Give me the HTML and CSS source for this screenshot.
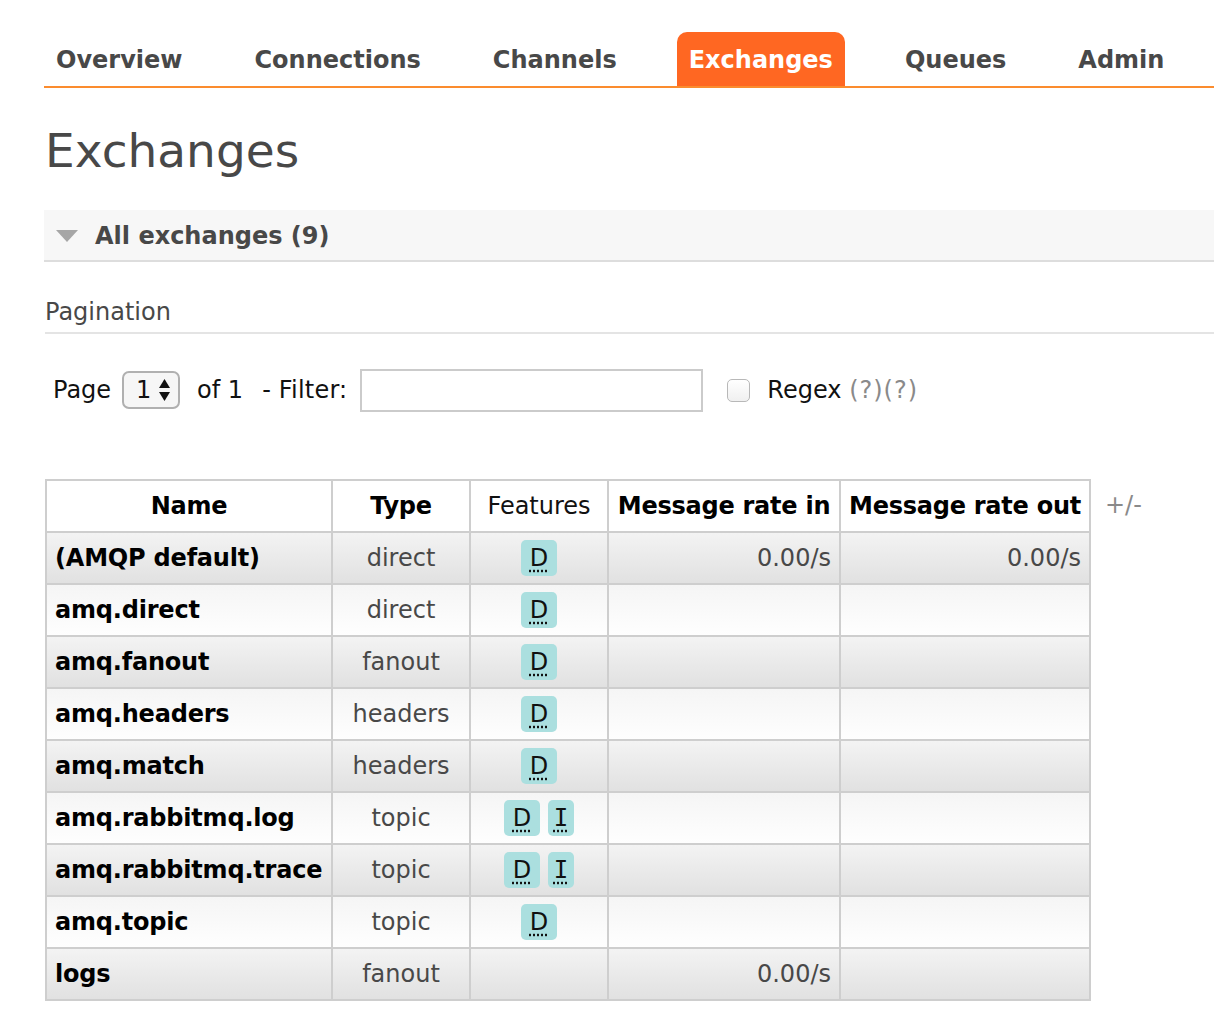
FILE: index.html
```html
<!DOCTYPE html>
<html lang="en">
<head>
<meta charset="utf-8">
<title>RabbitMQ Management - Exchanges</title>
<link rel="stylesheet" href="styles.css">
</head>
<body>
<nav class="tabs">
  <ul class="tab-list">
    <li class="tab">Overview</li>
    <li class="tab">Connections</li>
    <li class="tab">Channels</li>
    <li class="tab tab-active">Exchanges</li>
    <li class="tab">Queues</li>
    <li class="tab">Admin</li>
  </ul>
</nav>
<main class="content">
  <h1 class="page-title">Exchanges</h1>
  <section class="section">
    <h2 class="section-head"><span class="tri"></span>All exchanges (9)</h2>
    <h3 class="sub-title">Pagination</h3>
    <div class="filter-row">
      <span class="lbl">Page</span>
      <span class="select-box"><span class="sel-val">1</span><svg class="sel-arrows" width="13" height="24" viewBox="0 0 13 24"><path d="M6.5 1 L12 10 L1 10 Z" fill="#111"/><path d="M6.5 23 L12 14 L1 14 Z" fill="#111"/></svg></span>
      <span class="lbl lbl-of">of 1</span>
      <span class="lbl lbl-filter">- Filter:</span>
      <input class="filter-input" type="text">
      <span class="checkbox"></span>
      <span class="lbl">Regex <span class="help">(?)(?)</span></span>
    </div>
    <div class="table-wrap">
      <table class="list">
        <colgroup>
          <col class="c-name"><col class="c-type"><col class="c-feat"><col class="c-in"><col class="c-out">
        </colgroup>
        <thead>
          <tr>
            <th>Name</th><th>Type</th><th class="th-plain">Features</th><th>Message rate in</th><th>Message rate out</th>
          </tr>
        </thead>
        <tbody>
          <tr class="alt1"><td class="name">(AMQP default)</td><td class="c">direct</td><td class="c"><abbr class="badge">D</abbr></td><td class="r">0.00/s</td><td class="r">0.00/s</td></tr>
          <tr class="alt2"><td class="name">amq.direct</td><td class="c">direct</td><td class="c"><abbr class="badge">D</abbr></td><td class="r"></td><td class="r"></td></tr>
          <tr class="alt1"><td class="name">amq.fanout</td><td class="c">fanout</td><td class="c"><abbr class="badge">D</abbr></td><td class="r"></td><td class="r"></td></tr>
          <tr class="alt2"><td class="name">amq.headers</td><td class="c">headers</td><td class="c"><abbr class="badge">D</abbr></td><td class="r"></td><td class="r"></td></tr>
          <tr class="alt1"><td class="name">amq.match</td><td class="c">headers</td><td class="c"><abbr class="badge">D</abbr></td><td class="r"></td><td class="r"></td></tr>
          <tr class="alt2"><td class="name">amq.rabbitmq.log</td><td class="c">topic</td><td class="c"><abbr class="badge">D</abbr> <abbr class="badge badge-i">I</abbr></td><td class="r"></td><td class="r"></td></tr>
          <tr class="alt1"><td class="name">amq.rabbitmq.trace</td><td class="c">topic</td><td class="c"><abbr class="badge">D</abbr> <abbr class="badge badge-i">I</abbr></td><td class="r"></td><td class="r"></td></tr>
          <tr class="alt2"><td class="name">amq.topic</td><td class="c">topic</td><td class="c"><abbr class="badge">D</abbr></td><td class="r"></td><td class="r"></td></tr>
          <tr class="alt1"><td class="name">logs</td><td class="c">fanout</td><td class="c"></td><td class="r">0.00/s</td><td class="r"></td></tr>
        </tbody>
      </table>
      <span class="plusminus">+/-</span>
    </div>
  </section>
</main>
</body>
</html>
```
FILE: styles.css
```css
html, body {
  margin: 0;
  padding: 0;
  background: #fff;
}
body {
  font-family: "DejaVu Sans", Verdana, sans-serif;
  color: #484848;
}

/* nav */
.tabs {
  margin: 32px 0 0 44px;
  border-bottom: 2px solid #fb8c2e;
}
.tab-list {
  list-style: none;
  margin: 0;
  padding: 0;
  display: flex;
  gap: 48px;
}
.tab {
  padding: 0 12px;
  height: 54px;
  line-height: 56px;
  font-size: 24px;
  font-weight: bold;
  color: #484848;
}
.tab-active {
  background: #ff6722;
  color: #fff;
  border-radius: 10px 10px 0 0;
}

/* main */
.content {
  padding-left: 44px;
}
.page-title {
  margin: 35px 0 0 1px;
  font-size: 47px;
  line-height: 56px;
  font-weight: normal;
  color: #484848;
}
.section {
  margin-top: 31px;
}
.section-head {
  margin: 0;
  height: 52px;
  box-sizing: border-box;
  padding-top: 2px;
  background: #f7f7f7;
  border-bottom: 2px solid #ddd;
  display: flex;
  align-items: center;
  font-size: 24px;
  font-weight: bold;
  color: #484848;
}
.tri {
  width: 0;
  height: 0;
  border-left: 11px solid transparent;
  border-right: 11px solid transparent;
  border-top: 12px solid #a6a6a6;
  margin: 0 17px 0 12px;
}
.sub-title {
  margin: 36px 0 0 1px;
  padding-bottom: 6px;
  border-bottom: 2px solid #e4e4e4;
  font-size: 24px;
  line-height: 28px;
  font-weight: normal;
  color: #484848;
}

.filter-row {
  display: flex;
  align-items: center;
  margin-top: 34px;
  padding-left: 9px;
  height: 44px;
  color: #111;
  font-size: 24px;
}
.lbl {
  white-space: nowrap;
}
.select-box {
  box-sizing: border-box;
  width: 58px;
  height: 38px;
  margin-left: 11px;
  border: 2px solid #b0b0b0;
  border-radius: 7px;
  background: #f6f6f6;
  display: flex;
  align-items: center;
  padding-left: 12px;
}
.sel-val {
  width: 22px;
}
.sel-arrows {
  display: block;
}
.lbl-of {
  margin-left: 17px;
}
.lbl-filter {
  margin-left: 19px;
  letter-spacing: 0.2px;
}
.filter-input {
  box-sizing: border-box;
  width: 343px;
  height: 43px;
  margin: 0 0 0 13px;
  border: 2px solid #cbcbcb;
  background: #fff;
  padding: 0;
}
.checkbox {
  box-sizing: border-box;
  width: 23px;
  height: 23px;
  margin: 0 17px 0 24px;
  border: 1.5px solid #b8b8b8;
  border-radius: 5px;
  background: linear-gradient(#fff, #f0f0f0);
}
.help {
  color: #8a8a8a;
  letter-spacing: 1px;
}

/* table */
.table-wrap {
  display: flex;
  align-items: flex-start;
  margin-top: 67px;
  padding-left: 1px;
}
.list {
  border-collapse: collapse;
  table-layout: fixed;
  width: 1044px;
  border: 2px solid #cecece;
  font-size: 24px;
}
.c-name { width: 286px; }
.c-type { width: 138px; }
.c-feat { width: 138px; }
.c-in { width: 232px; }
.c-out { width: 250px; }
.list th,
.list td {
  border: 2px solid #cecece;
  height: 52px;
  padding: 0 8px;
  box-sizing: border-box;
  white-space: nowrap;
}
.list th {
  background: #fff;
  color: #000;
  font-weight: bold;
  letter-spacing: -0.25px;
}
.list th.th-plain {
  font-weight: normal;
  color: #111;
  letter-spacing: 0;
}
.alt1 td {
  background: linear-gradient(#f3f3f3, #e1e1e1);
}
.alt2 td {
  background: linear-gradient(#f5f5f5, #fefefe);
}
.list td.name {
  font-weight: bold;
  color: #000;
  letter-spacing: -0.2px;
}
.list td.c {
  text-align: center;
  color: #484848;
}
.list td.r {
  text-align: right;
  color: #484848;
}
.badge {
  display: inline-block;
  box-sizing: border-box;
  min-width: 36px;
  height: 36px;
  line-height: 36px;
  padding: 0 9px;
  border-radius: 5px;
  background: #abdfdf;
  color: #111;
  text-decoration: underline dotted;
  text-underline-offset: 4px;
  vertical-align: middle;
}
.badge-i {
  min-width: 26px;
  padding: 0 6px;
  font-family: "DejaVu Sans Mono", monospace;
}
.plusminus {
  margin: 12px 0 0 14px;
  font-size: 24px;
  color: #8a8a8a;
}
```
